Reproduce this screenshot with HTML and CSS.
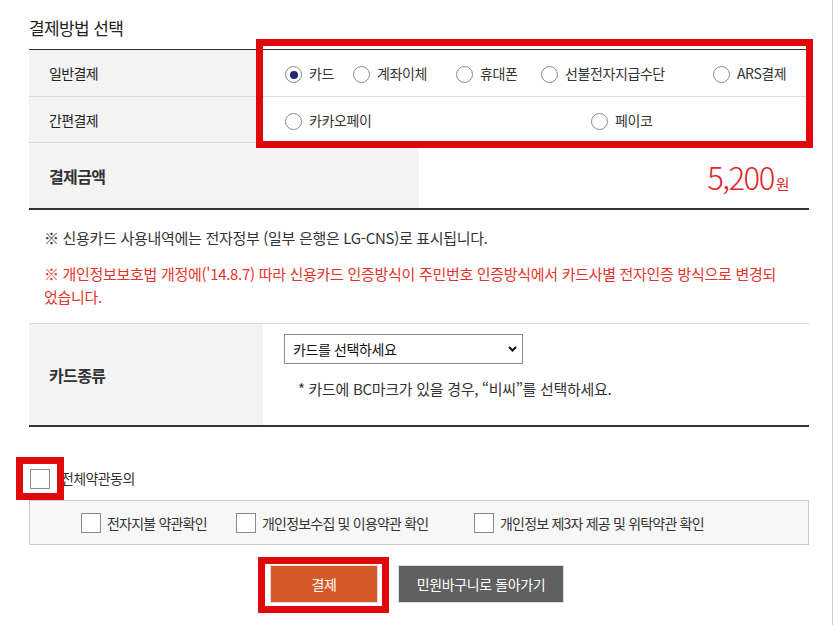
FILE: index.html
```html
<!DOCTYPE html>
<html lang="ko">
<head>
<meta charset="utf-8">
<title>결제방법 선택</title>
<link rel="stylesheet" href="styles.css">
</head>
<body>
<div class="page">
  <h2 class="title">결제방법 선택</h2>

  <div class="method-table">
    <div class="row row-normal">
      <div class="th">일반결제</div>
      <div class="td radios radios-normal">
        <label class="radio"><span class="circle checked"></span><span class="rtext">카드</span></label>
        <label class="radio"><span class="circle"></span><span class="rtext">계좌이체</span></label>
        <label class="radio"><span class="circle"></span><span class="rtext">휴대폰</span></label>
        <label class="radio"><span class="circle"></span><span class="rtext">선불전자지급수단</span></label>
        <label class="radio"><span class="circle"></span><span class="rtext">ARS결제</span></label>
      </div>
    </div>
    <div class="row row-easy">
      <div class="th">간편결제</div>
      <div class="td radios radios-easy">
        <label class="radio"><span class="circle"></span><span class="rtext">카카오페이</span></label>
        <label class="radio"><span class="circle"></span><span class="rtext">페이코</span></label>
      </div>
    </div>
    <div class="row row-amount">
      <div class="th th-strong">결제금액</div>
      <div class="td amount"><span class="num">5,200</span><span class="won">원</span></div>
    </div>
  </div>

  <div class="notice">
    <p class="n1">※ 신용카드 사용내역에는 전자정부 (일부 은행은 LG-CNS)로 표시됩니다.</p>
    <p class="n2">※ 개인정보보호법 개정에('14.8.7) 따라 신용카드 인증방식이 주민번호 인증방식에서 카드사별 전자인증 방식으로 변경되었습니다.</p>
  </div>

  <div class="card-table">
    <div class="th th-strong">카드종류</div>
    <div class="td card-td">
      <div class="select-wrap">
        <select class="select"><option>카드를 선택하세요</option></select>
        <svg class="chev" width="9" height="6" viewBox="0 0 9 6"><path d="M1 1 L4.5 4.5 L8 1" fill="none" stroke="#111" stroke-width="2"/></svg>
      </div>
      <p class="card-note">* 카드에 BC마크가 있을 경우, “비씨”를 선택하세요.</p>
    </div>
  </div>

  <div class="agree-all">
    <span class="box"></span><span class="agree-text">전체약관동의</span>
  </div>
  <div class="agree-list">
    <label class="agree-item"><span class="box"></span><span>전자지불 약관확인</span></label>
    <label class="agree-item"><span class="box"></span><span>개인정보수집 및 이용약관 확인</span></label>
    <label class="agree-item"><span class="box"></span><span>개인정보 제3자 제공 및 위탁약관 확인</span></label>
  </div>

  <div class="buttons">
    <button class="btn btn-pay">결제</button>
    <button class="btn btn-back">민원바구니로 돌아가기</button>
  </div>

  <div class="mark mark-methods"></div>
  <div class="mark mark-agree"></div>
  <div class="mark mark-pay"></div>
</div>
</body>
</html>
```

FILE: styles.css
```css
html, body {
  margin: 0;
  padding: 0;
  background: #fff;
}
body {
  font-family: "Noto Sans CJK KR", "Noto Sans", sans-serif;
  color: #222;
  font-size: 14px;
  letter-spacing: -0.6px;
}
.page {
  position: relative;
  box-sizing: border-box;
  width: 833px;
  height: 625px;
  padding: 0 23px 0 29px;
  border-right: 1px solid #cfcfcf;
}
.title {
  margin: 0 0 7px;
  padding-top: 14px;
  font-size: 17px;
  font-weight: 400;
  line-height: 28px;
  letter-spacing: -0.6px;
  color: #222;
}
.method-table {
  border-top: 1px solid #333;
  border-bottom: 2px solid #333;
}
.row {
  display: grid;
  grid-template-columns: 234px 1fr;
  border-bottom: 1px solid #dcdcdc;
}
.row-normal { height: 46px; }
.row-easy { height: 45px; }
.row-amount {
  height: 65px;
  grid-template-columns: 1fr 1fr;
  border-bottom: 0;
}
.th {
  background: #f4f4f4;
  padding-left: 20px;
  display: flex;
  align-items: center;
  font-size: 14px;
}
.th-strong {
  font-weight: 700;
  font-size: 16px;
  color: #333;
}
.td {
  display: flex;
  align-items: center;
}
.radios {
  display: grid;
  align-items: center;
  padding-left: 22px;
}
.radios-normal { grid-template-columns: 68px 103px 85px 172px auto; }
.radios-easy { grid-template-columns: 306px auto; }
.radio {
  display: flex;
  align-items: center;
  color: #333;
  letter-spacing: -0.4px;
}
.circle {
  box-sizing: border-box;
  width: 17px;
  height: 17px;
  border: 1px solid #8a8a8a;
  border-radius: 50%;
  margin-right: 7px;
  margin-top: 3px;
  background: #fff;
  display: flex;
  align-items: center;
  justify-content: center;
}
.circle.checked::after {
  content: "";
  width: 8px;
  height: 8px;
  border-radius: 50%;
  background: #1f2670;
}
.amount {
  justify-content: flex-end;
  align-items: baseline;
  padding-right: 20px;
  padding-top: 14px;
  color: #e0282e;
  box-sizing: border-box;
}
.num {
  font-size: 31px;
  font-weight: 300;
  letter-spacing: -1.5px;
  line-height: 40px;
}
.won {
  font-size: 15px;
  margin-left: 2px;
}
.notice {
  padding: 16px 15px 0;
  margin-bottom: 15px;
}
.notice p {
  margin: 0;
  line-height: 23px;
  font-size: 15px;
  letter-spacing: -0.3px;
  word-break: break-all;
}
.n1 { color: #333; margin-bottom: 13px !important; }
.n2 { color: #e5322b; max-width: 738px; }
.card-table {
  display: grid;
  grid-template-columns: 234px 1fr;
  border-top: 1px solid #dcdcdc;
  border-bottom: 2px solid #333;
  height: 101px;
}
.card-td {
  display: block;
  padding: 10px 0 0 21px;
}
.select-wrap {
  position: relative;
  width: 239px;
  height: 30px;
}
.select {
  appearance: none;
  -webkit-appearance: none;
  box-sizing: border-box;
  width: 239px;
  height: 30px;
  border: 1px solid #8a8a8a;
  border-radius: 0;
  background: #fff;
  padding: 0 0 0 8px;
  font-family: "Noto Sans CJK KR", "Noto Sans", sans-serif;
  font-size: 14px;
  letter-spacing: -0.4px;
  color: #111;
}
.chev {
  position: absolute;
  right: 6px;
  top: 12px;
}
.card-note {
  margin: 13px 0 0 14px;
  line-height: 24px;
  font-size: 15px;
  letter-spacing: -0.3px;
  color: #333;
}
.box {
  box-sizing: border-box;
  width: 20px;
  height: 20px;
  border: 1px solid #8a8a8a;
  background: #fff;
  flex: none;
}
.agree-all {
  display: flex;
  align-items: center;
  margin-top: 42px;
  padding-left: 1px;
  height: 20px;
}
.agree-text {
  margin-left: 11px;
  margin-top: -3px;
  color: #333;
}
.agree-list {
  margin-top: 11px;
  height: 43px;
  border: 1px solid #cccccc;
  background: #f7f7f7;
  display: grid;
  grid-template-columns: 155px 238px auto;
  align-items: center;
  padding-left: 51px;
  letter-spacing: -0.8px;
}
.agree-item {
  display: flex;
  align-items: center;
  color: #333;
}
.agree-item .box { margin-right: 6px; }
.buttons {
  display: flex;
  justify-content: center;
  gap: 20px;
  margin-top: 20px;
  padding-right: 4px;
}
.btn {
  box-sizing: border-box;
  height: 38px;
  border: 1px solid #dedede;
  color: #fff;
  font-family: "Noto Sans CJK KR", "Noto Sans", sans-serif;
  font-size: 14px;
  letter-spacing: -0.4px;
  padding: 0;
}
.btn-pay {
  width: 108px;
  background: #d45a27;
}
.btn-back {
  width: 166px;
  background: #606060;
}
.mark {
  position: absolute;
  box-sizing: border-box;
  border: 7px solid #e1080c;
}
.mark-methods { left: 256px; top: 39px; width: 557px; height: 109px; }
.mark-agree { left: 16px; top: 457px; width: 48px; height: 43px; }
.mark-pay { left: 258px; top: 557px; width: 131px; height: 56px; }
```
